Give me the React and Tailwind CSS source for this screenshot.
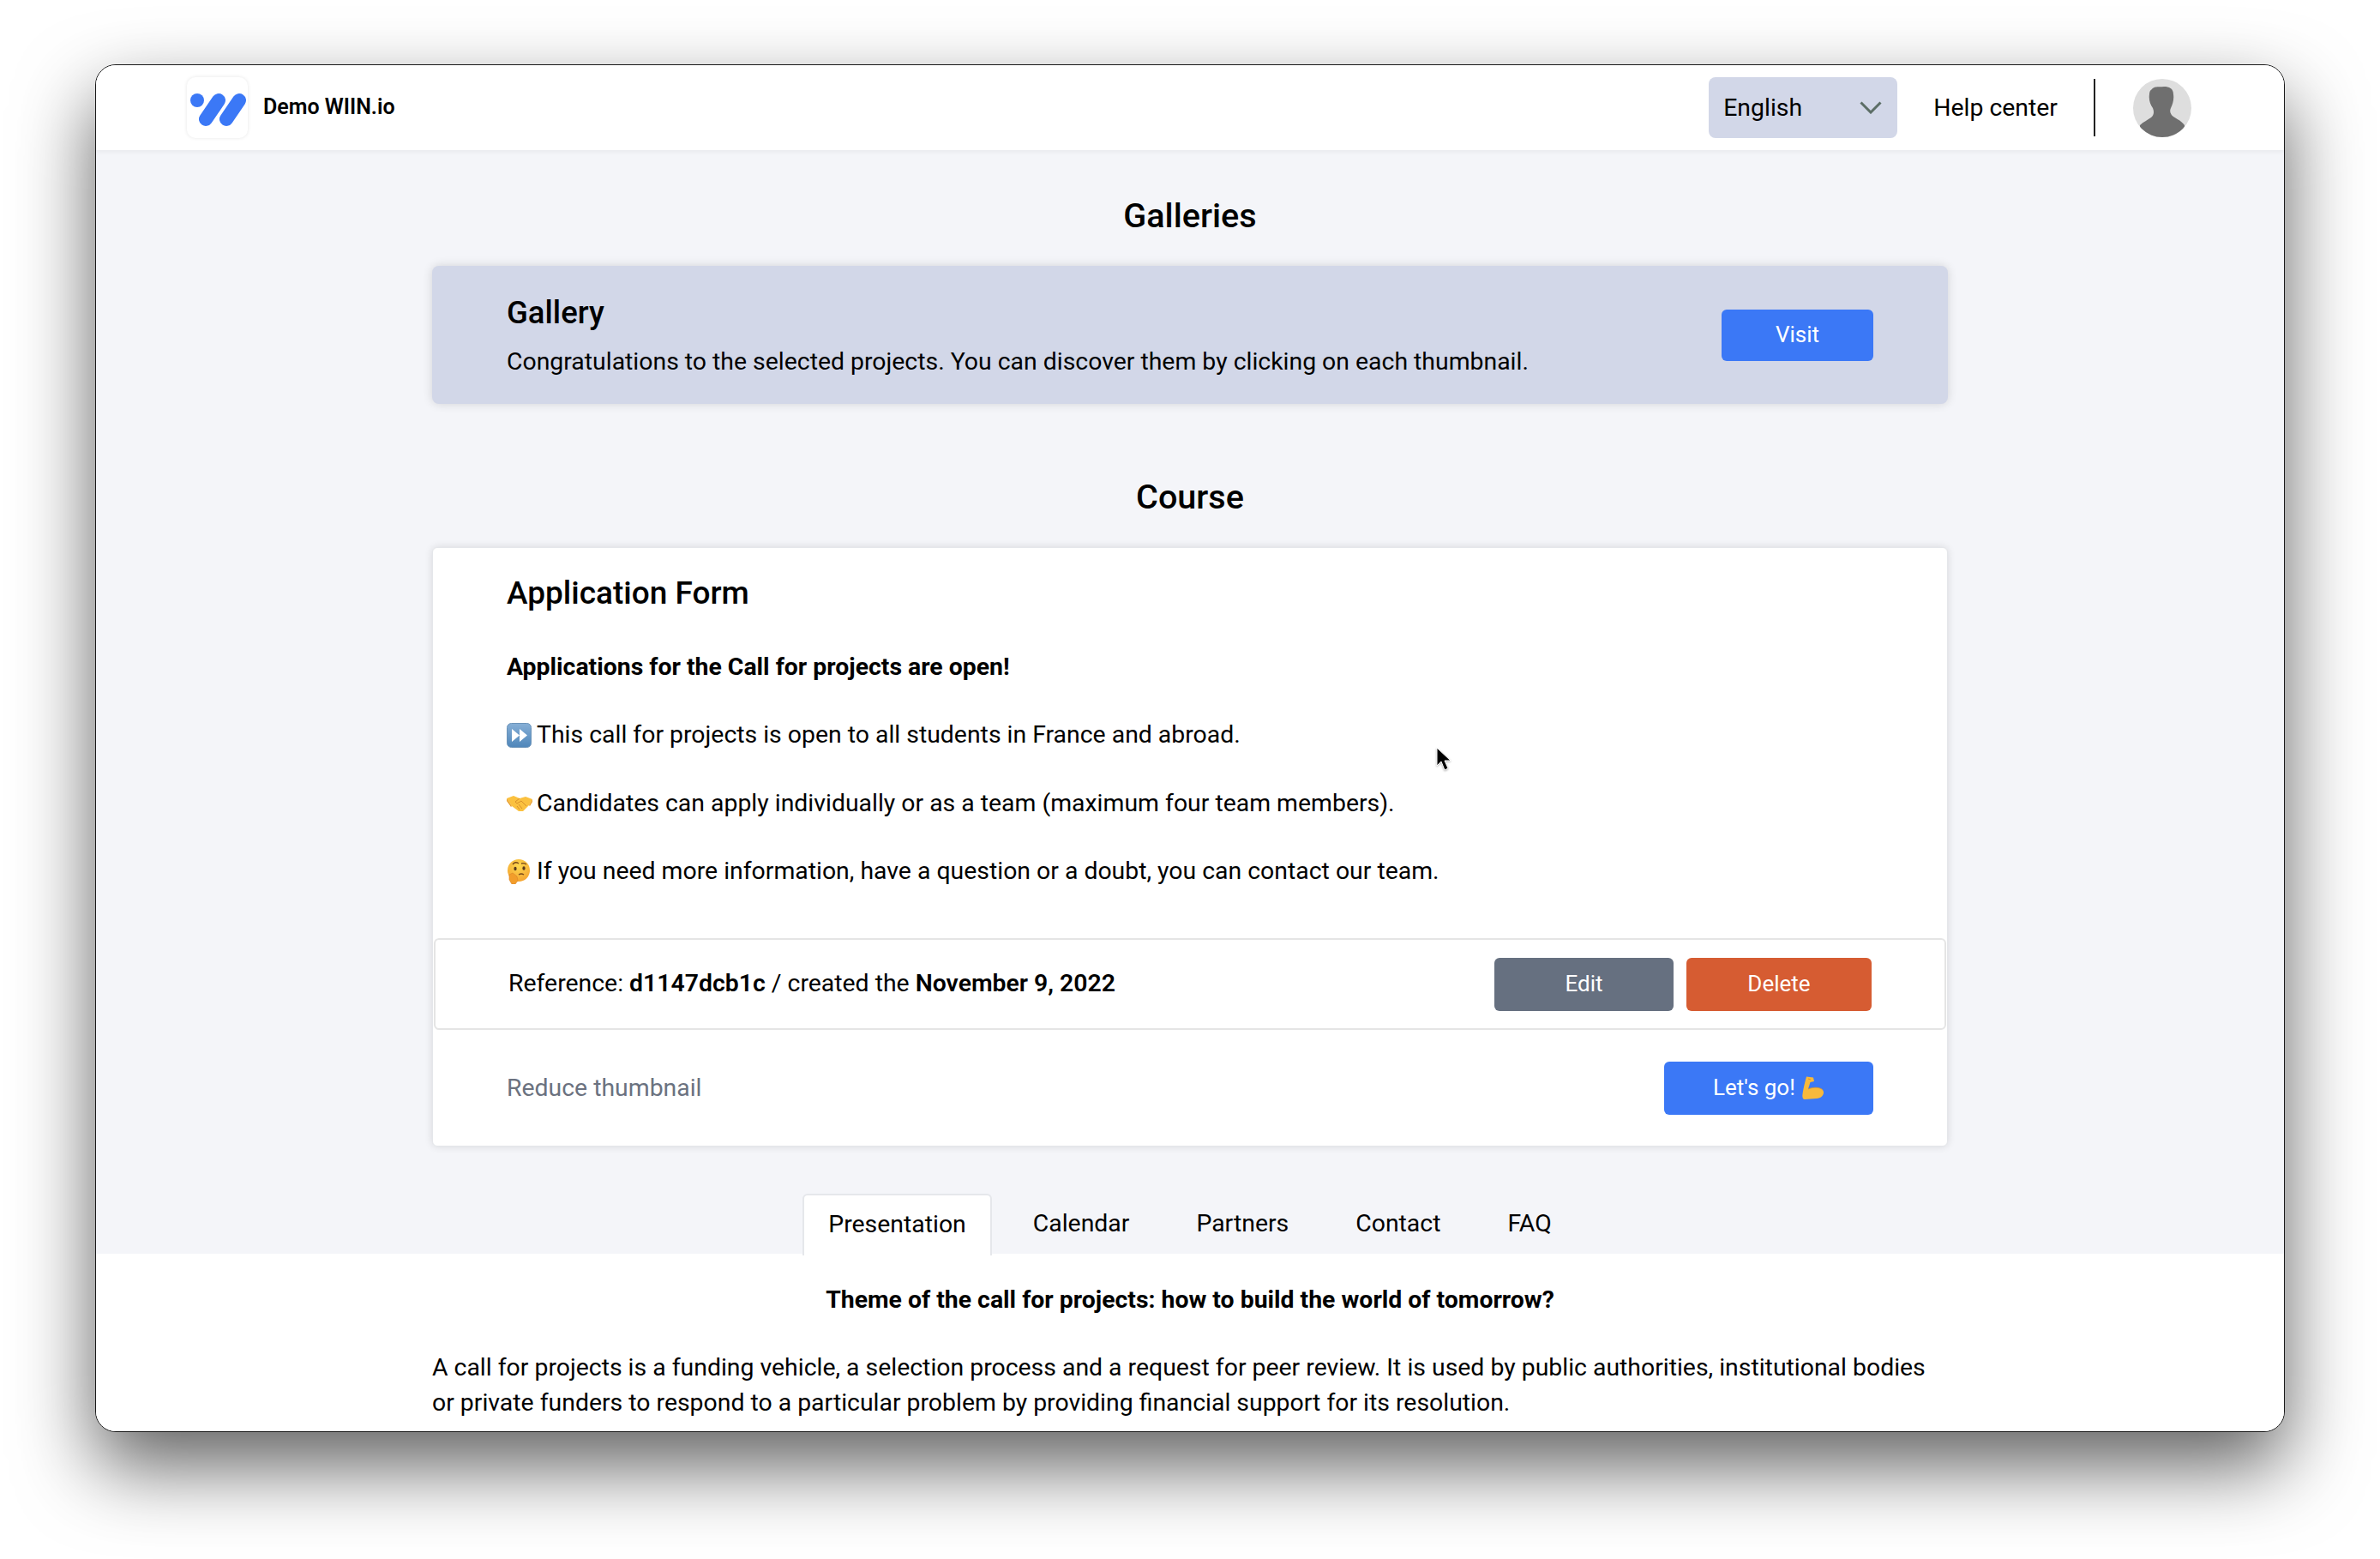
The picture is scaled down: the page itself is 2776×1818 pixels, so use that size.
import React from 'react';

const Logo = () => (
    <div className="w-[71px] h-[71px] rounded-[10px] bg-white shadow-[0_0_4px_rgba(0,0,0,0.1)]">
        <svg width="71" height="71" viewBox="0 0 71 71" fill="none">
            <circle cx="12" cy="27" r="8" fill="#3b78f6" />
            <path d="M37 27 L22 49 M61 27 L46 49" stroke="#3b78f6" strokeWidth="16" strokeLinecap="round" />
        </svg>
    </div>
);

const Avatar = () => (
    <svg width="68" height="68" viewBox="0 0 68 68">
        <defs>
            <clipPath id="avatar-clip"><circle cx="34" cy="34" r="34" /></clipPath>
        </defs>
        <circle cx="34" cy="34" r="34" fill="#dedede" />
        <path
            clipPath="url(#avatar-clip)"
            d="M22 12 C25 8 31 10 36 9 C42 9 47 11 47 18 C48 24 46 30 44 34 C42 38 44 42 47 44 C52 47 57 50 60 54 L60 68 L8 68 L8 54 C12 50 17 48 21 45 C24 42 25 39 23 34 C20 30 18 24 19 18 C19 15 20 13 22 12 Z"
            fill="#6f6f6f"
        />
    </svg>
);

const FastForwardEmoji = () => (
    <svg width="29" height="29" viewBox="0 0 29 29" className="shrink-0">
        <defs>
            <linearGradient id="ff-bg" x1="0" y1="0" x2="0" y2="1">
                <stop offset="0" stopColor="#86afd6" />
                <stop offset="1" stopColor="#4f86ba" />
            </linearGradient>
        </defs>
        <rect x="0.5" y="0.5" width="28" height="28" rx="5" fill="url(#ff-bg)" stroke="#6b93b8" />
        <path d="M6 7 L15 14.5 L6 22 Z M15 7 L24 14.5 L15 22 Z" fill="#fff" />
    </svg>
);

const HandshakeEmoji = () => (
    <svg width="30" height="26" viewBox="5 8 30 26" className="shrink-0">
        <path d="M5 15 L13 12 L20 15 L27 13 L35 16 L31 23 L24 30 L19 30 L11 24 Z" fill="#fbc13f" />
        <path d="M20 15 L15 19 L17 21 L22 18 L28 24" stroke="#d9912b" strokeWidth="1" fill="none" />
        <path d="M19 22 L23 27 M17 24 L20 28" stroke="#d9912b" strokeWidth="1" fill="none" />
        <path d="M5 15 L11 24 L10 25 L5 18 Z M35 16 L31 23 L32 24 L35 19 Z" fill="#e9a02d" />
    </svg>
);

const ThinkingEmoji = () => (
    <svg width="28" height="29" viewBox="0 0 28 29" className="shrink-0">
        <defs>
            <radialGradient id="think-bg" cx="0.5" cy="0.3" r="0.75">
                <stop offset="0" stopColor="#fdd84f" />
                <stop offset="1" stopColor="#f4a12e" />
            </radialGradient>
        </defs>
        <circle cx="14" cy="13" r="13" fill="url(#think-bg)" />
        <ellipse cx="10" cy="11" rx="1.6" ry="2.2" fill="#5a3a1a" />
        <ellipse cx="20" cy="10.5" rx="1.6" ry="2.2" fill="#5a3a1a" />
        <path d="M7 6 Q10 2 14 5 M17 5 Q20 4 23 6" stroke="#7a4a1a" strokeWidth="1.4" fill="none" />
        <path d="M14 18 Q17 16 20 18" stroke="#7a4a1a" strokeWidth="1.4" fill="none" />
        <path d="M3 18 L7 16 L12 20 L13 25 L10 29 L6 29 L3 24 Z" fill="#f29d2a" stroke="#d9852a" strokeWidth="0.6" />
    </svg>
);

const MuscleEmoji = () => (
    <svg width="27" height="28" viewBox="7 3 27 28" className="shrink-0">
        <path d="M13 4.5 L21 5.5 L22 10 L17.5 11 L15 19 C20 17 28 16 32 20 C35 24 31 30 25 30 L11 31 C8.5 31 8 28 8.5 25 C9 20 11 12 13 4.5 Z" fill="#f7b93c" />
        <path d="M15 19 C20 17 28 16 32 20" stroke="#dc962c" strokeWidth="0.8" fill="none" />
        <path d="M15 7 L18 8" stroke="#dc962c" strokeWidth="1" fill="none" />
    </svg>
);

const Cursor = () => (
    <svg width="20" height="30" viewBox="0 0 20 30" className="absolute left-[1675px] top-[871px] drop-shadow-[0_1px_1px_rgba(0,0,0,0.3)]">
        <path d="M1 1 L1 22 L6 17 L10 27 L14 25 L10 16 L17 16 Z" fill="#000" stroke="#fff" strokeWidth="1" />
    </svg>
);

const emojiLines = [
    { Icon: FastForwardEmoji, text: 'This call for projects is open to all students in France and abroad.' },
    { Icon: HandshakeEmoji, text: 'Candidates can apply individually or as a team (maximum four team members).' },
    { Icon: ThinkingEmoji, text: 'If you need more information, have a question or a doubt, you can contact our team.' },
];

const tabs = ['Calendar', 'Partners', 'Contact', 'FAQ'];

export default function App() {
    return (
        <div className="relative w-[2776px] h-[1818px] bg-white pt-[75px] pl-[111px] overflow-hidden text-black [font-family:Roboto,sans-serif] text-[28.4px] leading-[40px]">
            <div className="relative box-border w-[2554px] h-[1595px] flex flex-col rounded-[24px] border border-[#1a1a1a] bg-[#f4f5f9] overflow-hidden shadow-[0_40px_90px_rgba(0,0,0,0.62)]">
                <div className="absolute right-[10px] top-[9px] w-[11px] h-[11px] rounded-full bg-[#f5a033]" />

                <header className="h-[99px] shrink-0 flex items-center bg-white pl-[106px] pr-[108px] shadow-[0_2px_6px_rgba(0,0,0,0.05)] z-10">
                    <Logo />
                    <span className="ml-[18px] -mt-[2px] text-[25px] font-semibold">Demo WIIN.io</span>
                    <div className="ml-auto flex items-center">
                        <div className="w-[220px] h-[71px] rounded-[8px] bg-[#d2d7e8] flex items-center justify-between pl-[17px] pr-[18px]">
                            <span>English</span>
                            <svg width="26" height="15" viewBox="0 0 26 15" fill="none">
                                <path d="M1.5 1.5 L13 13 L24.5 1.5" stroke="#5c6e66" strokeWidth="3" />
                            </svg>
                        </div>
                        <span className="ml-[42px]">Help center</span>
                        <div className="ml-[42px] w-[2px] h-[67px] bg-[#222]" />
                        <div className="ml-[44px]"><Avatar /></div>
                    </div>
                </header>

                <main className="flex-1 flex flex-col min-h-0">
                    <div className="w-[1768px] mx-auto shrink-0">
                        <h2 className="mt-[47px] h-[60px] flex items-center justify-center text-[39.6px] font-medium">Galleries</h2>
                        <section className="mt-[28px] h-[161px] rounded-[8px] bg-[#d2d7e8] shadow-[0_0_12px_rgba(0,0,0,0.14)] flex items-center justify-between pl-[87px] pr-[87px]">
                            <div>
                                <h3 className="h-[50px] flex items-center text-[36.5px] font-medium">Gallery</h3>
                                <p className="mt-[12px]">Congratulations to the selected projects. You can discover them by clicking on each thumbnail.</p>
                            </div>
                            <button className="w-[177px] h-[60px] pb-[1px] rounded-[6px] bg-[#3b78f6] text-white text-[26px]">Visit</button>
                        </section>

                        <h2 className="mt-[79px] h-[60px] flex items-center justify-center text-[39.6px] font-medium">Course</h2>
                        <section className="mt-[28px] h-[699px] rounded-[6px] border border-[#e4e6ea] bg-white shadow-[0_0_10px_rgba(0,0,0,0.12)] flex flex-col">
                            <div className="pl-[86px] pt-[28px]">
                                <h3 className="h-[50px] flex items-center text-[37px] font-medium">Application Form</h3>
                                <p className="mt-[41px] font-bold">Applications for the Call for projects are open!</p>
                                <div className="mt-[39px] flex flex-col gap-[39.6px]">
                                    {emojiLines.map(({ Icon, text }) => (
                                        <p key={text} className="flex items-center h-[40px]">
                                            <span className="w-[35px] shrink-0 flex"><Icon /></span>
                                            <span>{text}</span>
                                        </p>
                                    ))}
                                </div>
                            </div>
                            <div className="mt-[58px] mx-px h-[107px] rounded-[6px] border-2 border-[#e5e5e5] flex items-center justify-between pl-[85px] pr-[85px]">
                                <p className="-mt-[2px]">Reference: <b className="font-semibold">d1147dcb1c</b> / created the <b className="font-semibold">November 9, 2022</b></p>
                                <div className="flex gap-[15px] text-[26px]">
                                    <button className="w-[209px] h-[62px] pb-[2px] rounded-[6px] bg-[#667080] text-white">Edit</button>
                                    <button className="w-[216px] h-[62px] pb-[2px] rounded-[6px] bg-[#d65c32] text-white">Delete</button>
                                </div>
                            </div>
                            <div className="flex-1 flex items-center justify-between pl-[86px] pr-[86px]">
                                <span className="text-[#6b7280]">Reduce thumbnail</span>
                                <button className="w-[244px] h-[62px] pb-[2px] rounded-[6px] bg-[#3b78f6] text-white text-[26px] flex items-center justify-center gap-[7px]">
                                    Let's go! <MuscleEmoji />
                                </button>
                            </div>
                        </section>
                    </div>

                    <nav className="mt-[55px] h-[70px] shrink-0 flex justify-center gap-[18px]">
                        <div className="h-[72px] px-[28px] pb-[2px] flex items-center rounded-t-[6px] border-2 border-b-0 border-[#e5e7eb] bg-white z-10">Presentation</div>
                        {tabs.map(tab => (
                            <div key={tab} className="px-[30px] flex items-center">{tab}</div>
                        ))}
                    </nav>

                    <article className="flex-1 min-h-0 bg-white pt-[34px]">
                        <div className="w-[1768px] mx-auto">
                            <p className="text-center font-bold">Theme of the call for projects: how to build the world of tomorrow?</p>
                            <p className="mt-[39px] leading-[40.5px]">A call for projects is a funding vehicle, a selection process and a request for peer review. It is used by public authorities, institutional bodies or private funders to respond to a particular problem by providing financial support for its resolution.</p>
                        </div>
                    </article>
                </main>
            </div>
            <Cursor />
        </div>
    );
}
